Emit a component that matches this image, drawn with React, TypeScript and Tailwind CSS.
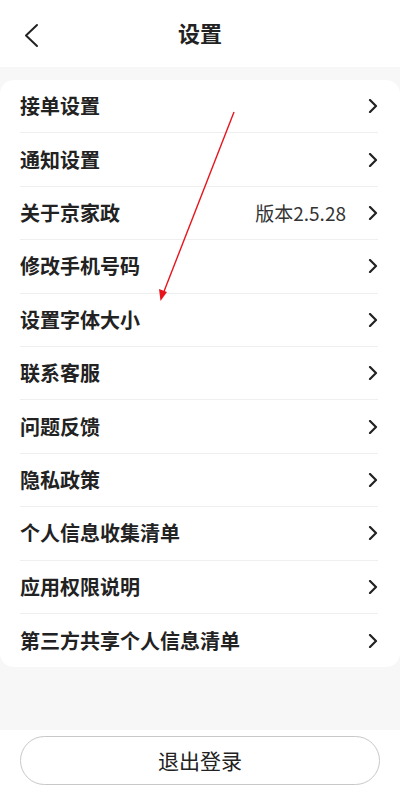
const rows: { name: string; extra?: string }[] = [
  { name: "接单设置" },
  { name: "通知设置" },
  { name: "关于京家政", extra: "版本2.5.28" },
  { name: "修改手机号码" },
  { name: "设置字体大小" },
  { name: "联系客服" },
  { name: "问题反馈" },
  { name: "隐私政策" },
  { name: "个人信息收集清单" },
  { name: "应用权限说明" },
  { name: "第三方共享个人信息清单" },
];

const font = "font-['Noto_Sans_CJK_SC','Noto_Sans',sans-serif]";

function Arrow() {
  return (
    <svg width="10" height="14" viewBox="0 0 10 14" className="shrink-0">
      <polyline points="2,1 8,7 2,13" fill="none" stroke="#222" strokeWidth="2.2" strokeLinecap="round" strokeLinejoin="round" />
    </svg>
  );
}

export default function App() {
  return (
    <div className={`relative w-[400px] h-[802px] bg-white flex flex-col ${font}`}>
      {/* header */}
      <div className="h-[67px] flex items-center justify-center relative shrink-0">
        <svg className="absolute left-[22px] top-[22px]" width="18" height="26" viewBox="0 0 18 26">
          <polyline points="15,3 4,13.5 15,24" fill="none" stroke="#222" strokeWidth="2" strokeLinecap="round" strokeLinejoin="round" />
        </svg>
        <span className="text-[22px] font-bold text-[#222] -mt-[2px]">设置</span>
      </div>

      {/* list */}
      <div className="h-[663px] bg-[#f7f7f7] pt-[13px] shrink-0">
        <div className="bg-white rounded-[14px] pl-5 pr-[22px]">
          {rows.map((r, i) => (
            <div
              key={r.name}
              className={`h-[53.4px] flex items-center ${i < rows.length - 1 ? "border-b border-[#efefef]" : ""}`}
            >
              <span className="text-[20px] font-semibold text-[#222] flex-1">{r.name}</span>
              {r.extra && <span className="text-[19px] text-[#333] mr-[22px]">{r.extra}</span>}
              <Arrow />
            </div>
          ))}
        </div>
      </div>

      {/* logout */}
      <div className="px-5 pt-[6px]">
        <button className="w-full h-[49px] rounded-full border border-[#c8c8c8] text-[21px] text-[#222]">
          退出登录
        </button>
      </div>

      {/* red annotation arrow */}
      <svg className="absolute left-0 top-0 pointer-events-none" width="400" height="802">
        <line x1="234" y1="112" x2="163" y2="294" stroke="#e8141c" strokeWidth="1.4" />
        <path d="M160.5 301 L159 289 L167 292 Z" fill="#e8141c" />
      </svg>
    </div>
  );
}
